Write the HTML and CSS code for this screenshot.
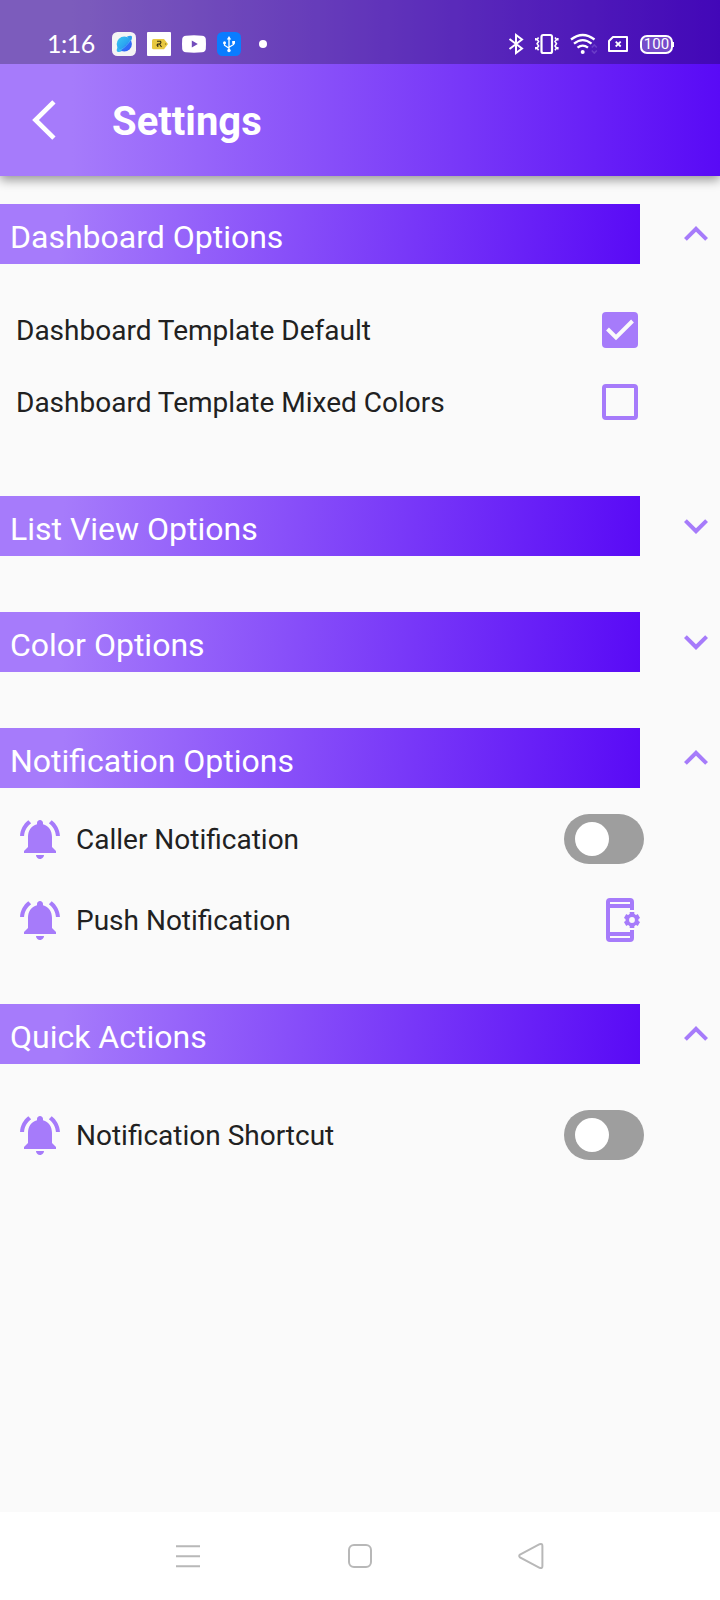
FILE: index.html
```html
<!DOCTYPE html>
<html lang="en">
<head>
<meta charset="utf-8">
<title>Settings</title>
<link rel="stylesheet" href="styles.css">
</head>
<body>
<svg class="defs" width="0" height="0" aria-hidden="true">
  <defs>
    <symbol id="up" viewBox="0 0 24 24"><path d="M12 8l-6 6 1.41 1.41L12 10.83l4.59 4.58L18 14z"/></symbol>
    <symbol id="down" viewBox="0 0 24 24"><path d="M16.59 8.59L12 13.17 7.41 8.59 6 10l6 6 6-6z"/></symbol>
    <symbol id="bell" viewBox="0 0 24 24"><path d="M7.58 4.08L6.15 2.65C3.75 4.48 2.17 7.3 2.03 10.5h2c.15-2.65 1.51-4.97 3.55-6.42zm12.39 6.42h2c-.15-3.2-1.73-6.02-4.12-7.85l-1.42 1.43c2.02 1.45 3.39 3.77 3.54 6.42zM18 11c0-3.07-1.64-5.64-4.5-6.32V4c0-.83-.67-1.5-1.5-1.5s-1.5.67-1.5 1.5v.68C7.63 5.36 6 7.92 6 11v5l-2 2v1h16v-1l-2-2v-5zm-6 11c.14 0 .27-.01.4-.04.65-.14 1.18-.58 1.44-1.18.1-.24.15-.5.15-.78h-4c.01 1.1.9 2 2.01 2z"/></symbol>
  </defs>
</svg>
<div class="screen">
  <header class="top">
    <div class="status">
      <span class="clock">1:16</span>
      <div class="status-apps">
        <svg width="24" height="24" viewBox="0 0 24 24">
          <defs><linearGradient id="planet" x1="0" y1="0" x2="1" y2="1"><stop offset="0" stop-color="#3cc8f2"/><stop offset=".55" stop-color="#2aa4f0"/><stop offset=".6" stop-color="#2f70f6"/><stop offset="1" stop-color="#2f5cf8"/></linearGradient></defs>
          <rect width="24" height="24" rx="5.5" fill="#f4f4f4"/>
          <circle cx="12.300" cy="12" r="7.600" fill="url(#planet)"/>
          <path d="M15 4.500Q19.500 3 20 4.700Q20.200 6.500 19 9Z" fill="#2a9df0"/>
          <path d="M5.500 15Q4.300 18 5 19.500Q6.500 20.500 10 19Z" fill="#33b5f2"/>
          <path d="M7 18.500C11 17 16 12.500 18.500 8" fill="none" stroke="#4fc3f6" stroke-width=".8"/>
        </svg>
        <svg width="24" height="24" viewBox="0 0 24 24">
          <rect width="24" height="24" rx="1" fill="#fff"/>
          <path d="M6.500 7H17L21 12L17 17.300H6.500Q5 17.300 5 15.800V8.500Q5 7 6.500 7Z" fill="#e8c840"/>
          <path d="M10 9.200H13.500Q14.700 11 12.500 12L14.500 15M12 12H10.800V15M10.800 12L9.600 13.500" fill="none" stroke="#332c12" stroke-width="1.100"/>
          <circle cx="18.600" cy="12" r=".7" fill="#8d7420"/>
        </svg>
        <svg width="24" height="24" viewBox="0 0 24 24">
          <path fill-rule="evenodd" d="M4 3.700Q12 2.800 20 3.700Q23.500 4 23.800 7Q24.200 12 23.800 17Q23.500 20 20 20.300Q12 21.200 4 20.300Q.5 20 .2 17Q-.2 12 .2 7Q.5 4 4 3.700ZM9.800 8.500V15.500L15.800 12Z" fill="#fff"/>
        </svg>
        <svg width="24" height="24" viewBox="0 0 24 24">
          <rect width="24" height="24" rx="5.500" fill="#0a7cff"/>
          <g fill="none" stroke="#fff" stroke-width="1.300"><path d="M12 6V18.500M7.500 11V13.200L12 16.200M16.600 10.500V12.500L12 15.200"/></g>
          <g fill="#fff"><path d="M12 4L14.200 7.500H9.800Z"/><circle cx="12" cy="18.500" r="1.700"/><circle cx="7.500" cy="10.700" r="1.500"/><rect x="15.200" y="9" width="2.800" height="2.800"/></g>
        </svg>
      </div>
      <span class="dot"></span>
      <div class="status-system">
        <svg width="16" height="24" viewBox="0 0 16 24"><path d="M1.500 7L14 16.500L8 21V3L14 7.500L1.500 17" fill="none" stroke="#fff" stroke-width="2"/></svg>
        <svg width="24" height="24" viewBox="0 0 24 24"><g fill="none" stroke="#fff"><rect x="6.500" y="3" width="10.500" height="18" rx="1.800" stroke-width="2.200"/><path stroke-width="1.600" d="M3.600 5.500l-1.500 2 1.500 2-1.500 2.200 1.500 2.200-1.500 2.200 1.500 2.200M.8 6v2.500M.8 15v2.500M20 5.500l1.500 2-1.500 2 1.500 2.200-1.500 2.200 1.500 2.200-1.500 2.200M22.800 6v2.500M22.800 15v2.500"/></g></svg>
        <svg width="27" height="24" viewBox="0 0 27 24"><g fill="none" stroke="#fff" stroke-width="2.300"><path d="M1 7.500Q12.700-1.500 24.500 7.500M4 11.700Q12.700 4.500 21.500 11.700M7.500 15.700Q12.700 11.500 18 15.700"/></g><circle cx="12.700" cy="20" r="2" fill="#fff"/><path d="M21.800 15.500L24.300 13L26.800 15.500M21.800 18.500L24.300 21L26.800 18.500" fill="none" stroke="#6a3cc8" stroke-width="1.600"/></svg>
        <svg width="20" height="24" viewBox="0 0 20 24"><path d="M1 9L5 5H19V19H1Z" fill="none" stroke="#fff" stroke-width="2" stroke-linejoin="round"/><path d="M7.700 9.700L12.700 14.500M12.700 9.700L7.700 14.500" stroke="#fff" stroke-width="1.800"/></svg>
        <div class="battery">100</div>
      </div>
    </div>
    <div class="appbar">
      <svg width="24" height="40" viewBox="0 0 24 40"><path d="M21.900 1.800L3.500 20L21.900 38.200" fill="none" stroke="#fff" stroke-width="4.700"/></svg>
      <h1 class="title">Settings</h1>
    </div>
  </header>

  <main class="content">
    <section class="group">
      <div class="group-head"><h2 class="bar">Dashboard Options</h2><svg class="icon"><use href="#up"/></svg></div>
      <div class="checks">
        <div class="check-row"><span>Dashboard Template Default</span>
          <svg width="36" height="36" viewBox="0 0 36 36"><rect width="36" height="36" rx="4" fill="#a67bfa"/><path d="M5.500 17L14 25.500L30.500 9" fill="none" stroke="#fafafa" stroke-width="4"/></svg></div>
        <div class="check-row"><span>Dashboard Template Mixed Colors</span>
          <svg width="36" height="36" viewBox="0 0 36 36"><rect x="2" y="2" width="32" height="32" rx="2" fill="none" stroke="#a67bfa" stroke-width="4"/></svg></div>
      </div>
    </section>

    <section class="group">
      <div class="group-head"><h2 class="bar">List View Options</h2><svg class="icon"><use href="#down"/></svg></div>
    </section>

    <section class="group">
      <div class="group-head"><h2 class="bar">Color Options</h2><svg class="icon"><use href="#down"/></svg></div>
    </section>

    <section class="group">
      <div class="group-head"><h2 class="bar">Notification Options</h2><svg class="icon"><use href="#up"/></svg></div>
      <div class="items">
        <div class="item"><svg class="icon"><use href="#bell"/></svg><span class="label">Caller Notification</span><span class="switch"></span></div>
        <div class="item"><svg class="icon"><use href="#bell"/></svg><span class="label">Push Notification</span>
          <svg class="icon" viewBox="0 0 24 24"><path fill-rule="evenodd" d="M7 1H17Q19 1 19 3V7H17V6H7V18H17V17H19V21Q19 23 17 23H7Q5 23 5 21V3Q5 1 7 1ZM7 3V4H17V3ZM7 20V21H17V20Z"/><g fill="none" stroke="#a67bfa"><circle cx="18" cy="12" r="2.350" stroke-width="1.800"/><path stroke-width="2.300" d="M18 8V9.700M18 14.300V16M14.540 10L16 10.850M20 13.150L21.460 14M14.540 14L16 13.150M20 10.850L21.460 10"/></g></svg></div>
      </div>
    </section>

    <section class="group">
      <div class="group-head"><h2 class="bar">Quick Actions</h2><svg class="icon"><use href="#up"/></svg></div>
      <div class="items items-roomy">
        <div class="item"><svg class="icon"><use href="#bell"/></svg><span class="label">Notification Shortcut</span><span class="switch"></span></div>
      </div>
    </section>
  </main>

  <nav class="navbar">
    <svg width="24" height="24" viewBox="0 0 24 24"><path d="M0 2.200H24M0 12.200H24M0 22.200H24"/></svg>
    <svg width="24" height="24" viewBox="0 0 24 24"><rect x="1" y="1" width="22" height="22" rx="5"/></svg>
    <svg width="24" height="28" viewBox="0 0 24 28"><path d="M0 12.600L19.600 2.200Q22.400 1.200 22.400 4V24Q22.400 26.800 19.600 25.800L0 15.400Q-1.600 14 0 12.600Z"/></svg>
  </nav>
</div>
</body>
</html>
```

FILE: styles.css
```css
* { box-sizing: border-box; }
body { margin: 0; font-family: Roboto, sans-serif; background: #fafafa; color: #212121; }
svg { display: block; flex: none; overflow: visible; }
.defs { position: absolute; }
h1, h2 { margin: 0; }
.screen { width: 720px; height: 1600px; display: flex; flex-direction: column; overflow: hidden; }

.top { background: linear-gradient(90deg, #a67bfb 10%, #590af6 100%); color: #fff; box-shadow: 0 4px 10px rgba(0, 0, 0, .4); }
.status { height: 64px; padding: 24px 47px 0 47px; display: flex; align-items: center; background: rgba(0, 0, 0, .25); }
.clock { width: 65px; padding-bottom: 2px; font: 25px/38px Lato, sans-serif; letter-spacing: -.5px; }
.status-apps { display: flex; gap: 11px; }
.dot { width: 8px; height: 8px; margin-left: 18px; border-radius: 50%; background: #fff; }
.status-system { margin-left: auto; display: flex; align-items: center; }
.status-system svg { margin-right: 11px; }
.battery { position: relative; width: 33px; height: 19px; margin-left: 1px; border: 2px solid #fff; border-radius: 7px; background: rgba(255, 255, 255, .25); font-size: 15px; line-height: 15px; text-align: center; }
.battery::after { content: ""; position: absolute; right: -3px; top: 5px; width: 2px; height: 5px; background: #fff; }

.appbar { height: 112px; padding-left: 32px; display: flex; align-items: center; gap: 56px; }
.title { padding-top: 3px; font-size: 40px; font-weight: 700; line-height: 48px; }

.content { flex: 1; padding-top: 28px; display: flex; flex-direction: column; gap: 56px; }
.group-head { display: flex; align-items: center; justify-content: space-between; }
.bar { width: 640px; height: 60px; padding: 5px 0 0 10px; background: linear-gradient(95.400deg, #a67bfb 10%, #590af6 100%); color: #fff; font-size: 32px; font-weight: 400; line-height: 56px; }
.icon { width: 48px; height: 48px; fill: #a67bfa; }
.checks { width: 640px; padding: 30px 2px 2px 16px; font-size: 28px; }
.check-row { height: 72px; display: flex; align-items: center; justify-content: space-between; }
.items { width: 644px; padding: 26px 0 4px 16px; display: flex; flex-direction: column; gap: 32px; font-size: 28px; }
.items-roomy { padding-top: 46px; }
.item { display: flex; align-items: center; }
.label { flex: 1; padding-left: 12px; }
.switch { width: 80px; height: 50px; padding: 8px 11px; border-radius: 25px; background: #9e9e9e; }
.switch::before { content: ""; display: block; width: 34px; height: 34px; border-radius: 50%; background: #fff; }

.navbar { height: 88px; padding: 0 176px; display: flex; align-items: center; justify-content: space-between; background: #fff; fill: none; stroke: #b8b8b8; stroke-width: 2; }
```
